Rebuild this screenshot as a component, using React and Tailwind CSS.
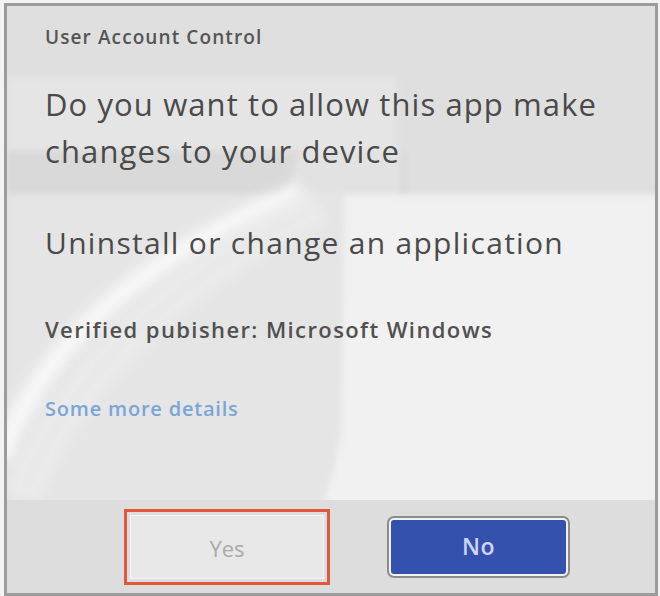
import React from "react";

const Watermark = () => (
  <svg
    className="absolute inset-0"
    width="648"
    height="494"
    viewBox="7 6 648 494"
    aria-hidden="true"
  >
    <defs>
      <filter id="soft" x="-10%" y="-10%" width="120%" height="120%">
        <feGaussianBlur stdDeviation="3" />
      </filter>
      <filter id="softer" x="-10%" y="-10%" width="120%" height="120%">
        <feGaussianBlur stdDeviation="6" />
      </filter>
    </defs>
    <rect x="7" y="6" width="648" height="494" fill="#dfdfdf" />
    <g filter="url(#soft)">
      <rect x="7" y="78" width="390" height="72" fill="#e5e5e5" />
      <rect x="7" y="150" width="400" height="45" fill="#d9d9d9" />
      <rect x="7" y="195" width="345" height="310" fill="#e5e5e5" />
      <path d="M345 195 L660 195 L660 505 L322 505 Q338 470 342 420 Z" fill="#f1f1f1" />
      <path d="M300 150 L400 150 L400 195 L285 195 Z" fill="#e2e2e2" />
    </g>
    <path
      d="M0 460 Q60 290 300 192"
      fill="none"
      stroke="#f7f7f7"
      strokeWidth="20"
      filter="url(#softer)"
    />
    <path
      d="M20 500 Q90 320 320 205"
      fill="none"
      stroke="#ececec"
      strokeWidth="40"
      filter="url(#softer)"
      opacity="0.7"
    />
  </svg>
);

export default function App() {
  return (
    <div className="w-[660px] h-[596px] bg-[#f3f3f3] pt-[3px] pl-[4px] font-['Open_Sans',_'Liberation_Sans',_sans-serif]">
      <div className="w-[654px] h-[593px] border-[3px] border-[#9c9c9c] flex flex-col bg-[#dfdfdf]">
        <div className="relative h-[494px] overflow-hidden">
          <Watermark />
          <div className="relative pl-[38px] pt-[19px]">
            <p className="text-[19px] leading-[24px] font-semibold text-[#555555] tracking-[1.1px]">
              User Account Control
            </p>
            <h1 className="mt-[32px] text-[31px] leading-[47px] text-[#4a4a4a] tracking-[1.1px] w-[580px]">
              Do you want to allow this app make changes to your device
            </h1>
            <p className="mt-[48px] text-[30px] leading-[40px] text-[#4a4a4a] tracking-[1.3px]">
              Uninstall or change an application
            </p>
            <p className="mt-[52px] text-[22px] leading-[28px] font-semibold text-[#505050] tracking-[1.4px]">
              Verified pubisher: Microsoft Windows
            </p>
            <p className="mt-[52px] text-[20px] leading-[28px] font-semibold text-[#7aa6d6] tracking-[0.8px]">
              Some more details
            </p>
          </div>
        </div>
        <div className="flex-1 bg-[#dddddd] flex items-center pl-[117px] gap-[57px]">
          <div className="w-[206px] h-[76px] border-[3px] border-[#e2583d] p-[3px]">
            <button className="w-full h-full bg-[#e8e8e8] border border-[#f4f4f4] text-[22px] text-[#a9a9a9] pt-[3px]">
              Yes
            </button>
          </div>
          <div className="w-[183px] h-[62px] rounded-[7px] border-2 border-[#8c8c8c] p-[2px] bg-[#f2f2f2]">
            <button className="w-full h-full rounded-[3px] bg-[#3451ae] text-[23px] font-semibold text-[#cfd6f2] tracking-[0.5px]">
              No
            </button>
          </div>
        </div>
      </div>
    </div>
  );
}
